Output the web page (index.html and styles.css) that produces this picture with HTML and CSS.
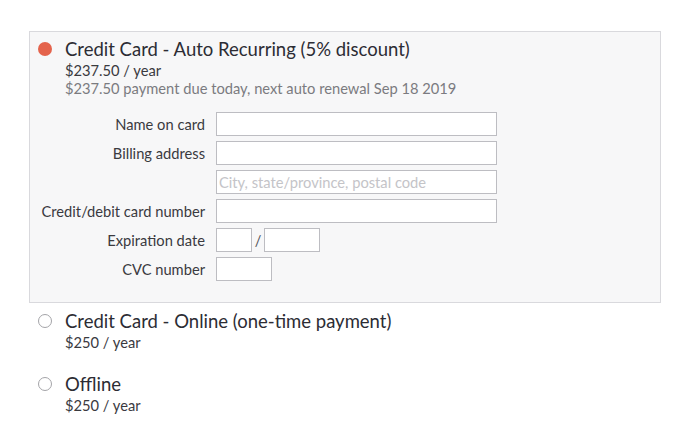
FILE: index.html
```html
<!DOCTYPE html>
<html>
<head>
<meta charset="utf-8">
<link rel="stylesheet" href="styles.css">
</head>
<body>
<div class="page">
  <div class="option option--active">
    <div class="option-head">
      <span class="radio radio--on"></span>
      <div class="option-text">
        <div class="option-title">Credit Card - Auto Recurring (5% discount)</div>
        <div class="option-price">$237.50 / year</div>
        <div class="option-note">$237.50 payment due today, next auto renewal Sep 18 2019</div>
      </div>
    </div>
    <div class="form">
      <label class="form-label">Name on card</label>
      <div class="form-field"><span class="input input--wide"></span></div>
      <label class="form-label">Billing address</label>
      <div class="form-field"><span class="input input--wide"></span></div>
      <span class="form-label"></span>
      <div class="form-field"><span class="input input--wide placeholder">City, state/province, postal code</span></div>
      <label class="form-label">Credit/debit card number</label>
      <div class="form-field"><span class="input input--wide"></span></div>
      <label class="form-label">Expiration date</label>
      <div class="form-field"><span class="input input--month"></span><span class="slash">/</span><span class="input input--year"></span></div>
      <label class="form-label">CVC number</label>
      <div class="form-field"><span class="input input--cvc"></span></div>
    </div>
  </div>
  <div class="option option--plain">
    <div class="option-head">
      <span class="radio"></span>
      <div class="option-text">
        <div class="option-title">Credit Card - Online (one-time payment)</div>
        <div class="option-price">$250 / year</div>
      </div>
    </div>
  </div>
  <div class="option option--plain option--last">
    <div class="option-head">
      <span class="radio"></span>
      <div class="option-text">
        <div class="option-title">Offline</div>
        <div class="option-price">$250 / year</div>
      </div>
    </div>
  </div>
</div>
</body>
</html>
```
FILE: styles.css
```css
html, body {
  margin: 0;
  padding: 0;
  background: #ffffff;
}
body {
  font-family: Lato, "Open Sans", sans-serif;
  color: #2e2e36;
}
.page {
  padding: 31px 19px 0 29px;
}
.option--active {
  background: #f7f7f8;
  border: 1px solid #d9d9dd;
  padding: 5px 8px 20px 8px;
  box-sizing: border-box;
  height: 272px;
}
.option--plain {
  padding: 6px 9px 0 9px;
}
.option--last {
  padding-top: 21px;
}
.option-head {
  display: flex;
  align-items: flex-start;
  gap: 13px;
}
.radio {
  flex: none;
  width: 14px;
  height: 14px;
  margin-top: 5px;
  border-radius: 50%;
  border: 1px solid #a4a4a8;
  background: #fff;
  box-sizing: border-box;
}
.radio--on {
  background: #e4634c;
  border: none;
}
.option-text {
  display: flex;
  flex-direction: column;
}
.option-title {
  font-size: 18.5px;
  line-height: 24px;
  color: #2c2c34;
}
.option-price {
  font-size: 14.7px;
  line-height: 18px;
  color: #3a3a3f;
}
.option-note {
  font-size: 14.7px;
  line-height: 18px;
  color: #7b7b80;
}
.form {
  display: grid;
  grid-template-columns: 175px 1fr;
  column-gap: 11px;
  row-gap: 5px;
  margin-top: 15px;
  margin-left: -8px;
}
.form-label {
  justify-self: end;
  font-size: 14.7px;
  line-height: 24px;
  color: #3a3a3f;
}
.form-field {
  display: flex;
  align-items: center;
  height: 24px;
}
.input {
  display: block;
  box-sizing: border-box;
  height: 24px;
  background: #fff;
  border: 1px solid #bdbdc2;
}
.input--wide { width: 281px; }
.input--month { width: 36px; }
.input--year { width: 56px; }
.input--cvc { width: 56px; }
.slash {
  width: 12px;
  text-align: center;
  font-size: 14.7px;
  color: #55555a;
}
.placeholder {
  font-size: 14.7px;
  line-height: 22px;
  padding-left: 2px;
  color: #c4c4c8;
  white-space: nowrap;
  overflow: hidden;
}
```
